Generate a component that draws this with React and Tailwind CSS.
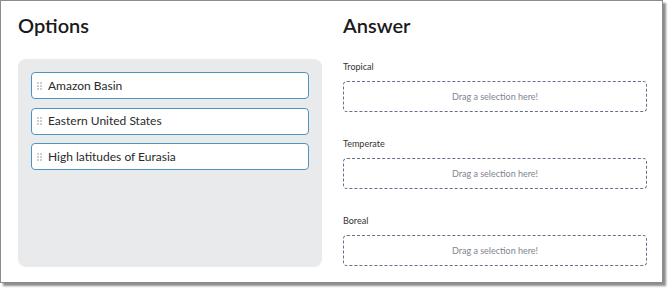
const options = ['Amazon Basin', 'Eastern United States', 'High latitudes of Eurasia'];
const zones = ['Tropical', 'Temperate', 'Boreal'];

function Grip() {
  return (
    <svg width="5" height="8" viewBox="0 0 5 8" className="shrink-0 fill-[#777]">
      <circle cx="1" cy="1" r="0.7" />
      <circle cx="4" cy="1" r="0.7" />
      <circle cx="1" cy="4" r="0.7" />
      <circle cx="4" cy="4" r="0.7" />
      <circle cx="1" cy="7" r="0.7" />
      <circle cx="4" cy="7" r="0.7" />
    </svg>
  );
}

export default function App() {
  return (
    <div className="w-[670px] h-[291px] bg-white font-['Lato',sans-serif]">
      <div className="w-[663px] h-[283px] border border-[#8c8c8c] bg-white shadow-[3px_3px_2px_rgba(0,0,0,0.45)] flex gap-[21px] pl-[17px] pt-[10px]">
        <div className="w-[304px] flex flex-col">
          <h2 className="text-[20px] leading-[28px] font-semibold text-[#1a1a1a]">Options</h2>
          <div className="mt-[20px] h-[208px] rounded-[8px] bg-[#e9eaeb] p-[13px] flex flex-col gap-[8.5px]">
            {options.map((opt) => (
              <div
                key={opt}
                className="h-[27px] rounded-[4px] border-[1.5px] border-[#4f93c3] bg-white flex items-center gap-[6px] pl-[5px]"
              >
                <Grip />
                <span className="text-[12px] text-[#2a2a2a]">{opt}</span>
              </div>
            ))}
          </div>
        </div>
        <div className="w-[304px] flex flex-col">
          <h2 className="text-[20px] leading-[28px] font-semibold text-[#1a1a1a]">Answer</h2>
          <div className="mt-[22px] flex flex-col gap-[26px]">
            {zones.map((z) => (
              <div key={z} className="flex flex-col">
                <span className="text-[9px] leading-[12px] text-[#333]">{z}</span>
                <div className="mt-[8px] h-[31px] rounded-[4px] border-[1.5px] border-dashed border-[#66708a] flex items-center justify-center">
                  <span className="text-[9px] text-[#80858f]">Drag a selection here!</span>
                </div>
              </div>
            ))}
          </div>
        </div>
      </div>
    </div>
  );
}
